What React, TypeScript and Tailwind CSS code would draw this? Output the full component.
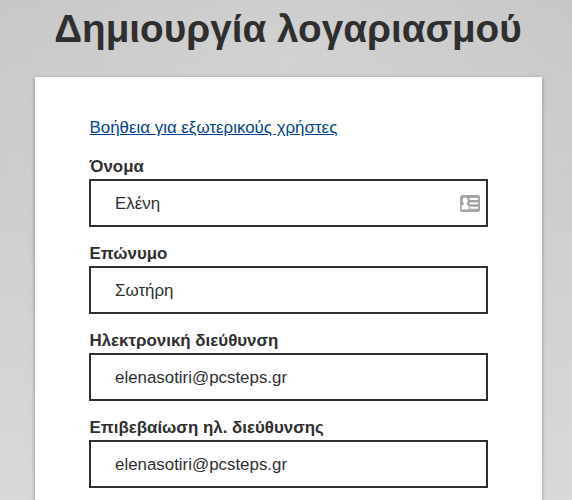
const fields = [
  { id: "first-name", label: "Όνομα", value: "Ελένη", card: true },
  { id: "last-name", label: "Επώνυμο", value: "Σωτήρη" },
  { id: "email", label: "Ηλεκτρονική διεύθυνση", value: "elenasotiri@pcsteps.gr" },
  { id: "email-confirm", label: "Επιβεβαίωση ηλ. διεύθυνσης", value: "elenasotiri@pcsteps.gr" },
];

function ContactCardIcon() {
  return (
    <svg width="20" height="17" viewBox="0 0 20 17" aria-hidden="true">
      <rect width="20" height="17" rx="2.5" fill="#a5a3a4" />
      <ellipse cx="5.2" cy="5.4" rx="2.5" ry="3" fill="#fff" />
      <path d="M3.8 7h2.8v2.4l2 1.4v3.6H1.6v-3.6l2.2-1.4z" fill="#fff" />
      <path d="M9.6 4h8.6M9.6 8.4h8.6M9.6 12.8h8.6" stroke="#fff" strokeWidth="1.9" />
    </svg>
  );
}

export default function App() {
  return (
    <main className="h-[500px] overflow-hidden bg-[radial-gradient(ellipse_60%_45%_at_50%_12%,rgba(255,255,255,0.18),transparent),linear-gradient(to_bottom,#c6c6c6,#d8dada)] font-['Liberation_Sans',sans-serif] text-[#2f2f2f]">
      <h1 className="h-[77px] pt-2 pl-1 text-center text-[38.7px] leading-[42px] font-bold whitespace-nowrap">
        Δημιουργία λογαριασμού
      </h1>
      <form className="ml-[35px] h-[500px] w-[507px] bg-white px-[54px] pt-[38px] shadow-[0_1px_4px_rgba(0,0,0,0.35)]">
        <a href="#" className="block h-[39px] pl-[0.5px] text-[16.9px] leading-[25px] text-[#004494] underline">
          Βοήθεια για εξωτερικούς χρήστες
        </a>
        {fields.map((f) => (
          <div key={f.id} className="h-[87px]">
            <label htmlFor={f.id} className="block h-[25px] pl-[0.5px] text-[16.9px] leading-[26px] font-bold">
              {f.label}
            </label>
            <div className="flex h-12 w-[399px] items-center border-2 border-[#2f2f2f] pr-[6px] pl-6">
              <input
                id={f.id}
                defaultValue={f.value}
                className="min-w-0 flex-1 bg-transparent pt-[2px] text-[16.9px] outline-none"
              />
              {f.card && <ContactCardIcon />}
            </div>
          </div>
        ))}
      </form>
    </main>
  );
}
